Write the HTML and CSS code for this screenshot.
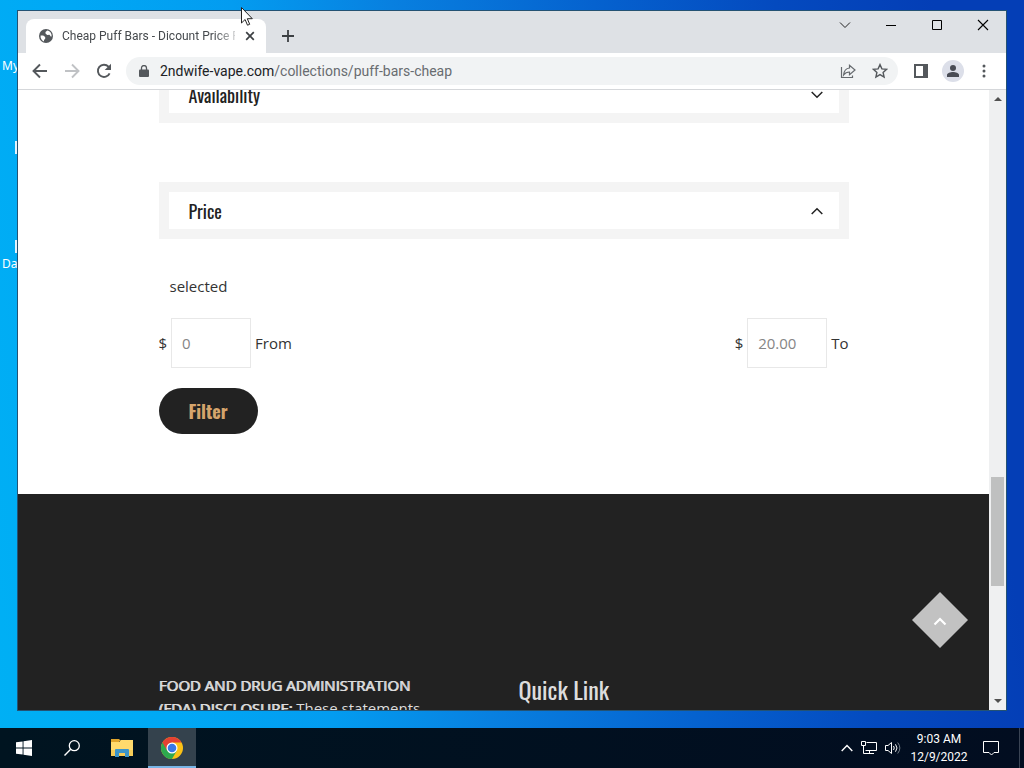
FILE: index.html
```html
<!DOCTYPE html>
<html lang="en">
<head>
<meta charset="utf-8">
<meta name="viewport" content="width=device-width, initial-scale=1">
<title>Cheap Puff Bars - Dicount Price</title>
<link rel="stylesheet" href="styles.css">
</head>
<body>
<div class="desktop">
  <div class="shortcut shortcut-my">My</div>
  <div class="shortcut-mark mark-one"></div>
  <div class="shortcut-mark mark-two"></div>
  <div class="shortcut shortcut-da">Da</div>
  <main class="window">
    <header class="titlebar">
      <div class="tab">
        <svg width="14" height="14" viewBox="0 0 14 14" aria-hidden="true"><circle cx="7" cy="7" r="7" fill="#54585c"/><path d="M1.600 6.600h2.600l2 1.500v1.700L5 11v1.600A6 6 0 0 1 1.600 6.600zM8.300 1.600 6.500 3v1.600L8.200 6l2.300-.2 1.200 1.600h.9c.3-2.800-1.500-5.200-4.300-5.800z" fill="#fff"/></svg>
        <span class="tab-title">Cheap Puff Bars - Dicount Price P</span>
        <button class="icon-btn tab-close" aria-label="Close tab"><svg width="10" height="10" viewBox="0 0 10 10"><path d="M1.200 1.200l7.600 7.600M8.800 1.200 1.200 8.800" stroke="#3c4043" stroke-width="1.700"/></svg></button>
      </div>
      <button class="icon-btn new-tab" aria-label="New tab"><svg width="14" height="14" viewBox="0 0 14 14"><path d="M7 1v12M1 7h12" stroke="#3c4043" stroke-width="1.800"/></svg></button>
      <div class="window-controls">
        <button class="icon-btn" aria-label="Search tabs"><svg width="12" height="12" viewBox="0 0 12 12"><path d="M1 3.500l5 5 5-5" fill="none" stroke="#222"/></svg></button>
        <button class="icon-btn" aria-label="Minimize"><svg width="12" height="12" viewBox="0 0 12 12"><path d="M1 6.500h10" stroke="#000"/></svg></button>
        <button class="icon-btn" aria-label="Maximize"><svg width="12" height="12" viewBox="0 0 12 12"><path d="M1.500 1.500h9v9h-9z" fill="none" stroke="#000"/></svg></button>
        <button class="icon-btn" aria-label="Close"><svg width="12" height="12" viewBox="0 0 12 12"><path d="M1 1l10 10M11 1 1 11" stroke="#000" stroke-width="1.100"/></svg></button>
      </div>
    </header>
    <nav class="toolbar" aria-label="Browser">
      <button class="icon-btn" aria-label="Back"><svg width="16" height="16" viewBox="0 0 16 16"><path d="M15 8H2M8 1.500 1.500 8 8 14.500" fill="none" stroke="#54585c" stroke-width="1.900"/></svg></button>
      <button class="icon-btn" aria-label="Forward"><svg width="16" height="16" viewBox="0 0 16 16"><path d="M1 8h13M8 1.500 14.500 8 8 14.500" fill="none" stroke="#c0c2c5" stroke-width="1.900"/></svg></button>
      <button class="icon-btn" aria-label="Reload"><svg width="16" height="16" viewBox="0 0 16 16"><path d="M13.600 10.300A6.100 6.100 0 1 1 12.500 3.700L14 5.300" fill="none" stroke="#54585c" stroke-width="1.900"/><path d="M15 .8v6.300H8.700z" fill="#54585c"/></svg></button>
      <div class="address">
        <svg width="10" height="12" viewBox="0 0 10 12" aria-hidden="true"><rect x="0" y="4.500" width="10" height="7.500" rx="1" fill="#54585c"/><path d="M2.500 5V3a2.500 2.500 0 0 1 5 0v2" fill="none" stroke="#54585c" stroke-width="1.300"/></svg>
        <a class="url" href="#">2ndwife-vape.com<span class="url-path">/collections/puff-bars-cheap</span></a>
        <button class="icon-btn" aria-label="Share"><svg width="16" height="16" viewBox="0 0 16 16"><path d="M1.500 4v10.500h11V12.500M9.500 5V2.300L15 7l-5.500 4.700V9C6.700 9 5 10 3.600 12 4 8 6 5.300 9.500 5z" fill="none" stroke="#65696d" stroke-width="1.200"/></svg></button>
        <button class="icon-btn" aria-label="Bookmark"><svg width="16" height="16" viewBox="0 0 16 16"><path d="M8 1.600l1.900 4.300 4.700.4-3.500 3.100 1 4.600L8 11.600 3.900 14l1-4.600L1.400 6.300l4.700-.4z" fill="none" stroke="#54585c" stroke-width="1.400"/></svg></button>
      </div>
      <button class="icon-btn" aria-label="Side panel"><svg width="14" height="14" viewBox="0 0 14 14"><path d="M0 0h14v14H0zM2 2v10h7V2z" fill="#54585c" fill-rule="evenodd"/></svg></button>
      <button class="icon-btn profile" aria-label="Profile"><svg width="12" height="12" viewBox="0 0 12 12"><circle cx="6" cy="3" r="3" fill="#494c55"/><path d="M0 12v-2c0-2 3.500-3 6-3s6 1 6 3v2z" fill="#494c55"/></svg></button>
      <button class="icon-btn more" aria-label="Menu"><svg width="4" height="14" viewBox="0 0 4 14"><g fill="#54585c"><circle cx="2" cy="2" r="1.500"/><circle cx="2" cy="7" r="1.500"/><circle cx="2" cy="12" r="1.500"/></g></svg></button>
    </nav>
    <div class="viewport">
      <div class="page">
        <section class="filters">
          <div class="content">
            <button class="facet facet-first">Availability<svg width="12" height="8" viewBox="0 0 12 8"><path d="M.7 1l5.300 5.300L11.300 1" fill="none" stroke="#222" stroke-width="1.500"/></svg></button>
            <button class="facet">Price<svg width="12" height="8" viewBox="0 0 12 8"><path d="M.7 7 6 1.700 11.300 7" fill="none" stroke="#222" stroke-width="1.500"/></svg></button>
            <form>
              <p class="selected">selected</p>
              <div class="range">
                <div class="field"><span>$</span><input id="from" type="text" placeholder="0"><label for="from">From</label></div>
                <div class="field"><span>$</span><input id="to" type="text" placeholder="20.00"><label for="to">To</label></div>
              </div>
              <button class="filter" type="button">Filter</button>
            </form>
          </div>
        </section>
        <footer class="footer">
          <div class="content footer-grid">
            <p class="disclosure"><strong>FOOD AND DRUG ADMINISTRATION (FDA) DISCLOSURE:</strong> These statements</p>
            <h2 class="quick">Quick Link</h2>
          </div>
        </footer>
        <button class="to-top" aria-label="Back to top"><svg width="56" height="56" viewBox="0 0 56 56"><path d="M28 0 56 28 28 56 0 28z" fill="#c2c2c2"/><path d="M22.500 32.500 28 27l5.500 5.500" fill="none" stroke="#fff" stroke-width="2.200"/></svg></button>
      </div>
      <div class="scrollbar">
        <svg width="8" height="4" viewBox="0 0 8 4"><path d="M0 4l4-4 4 4z" fill="#505050"/></svg>
        <div class="track"><div class="thumb"></div></div>
        <svg width="8" height="4" viewBox="0 0 8 4"><path d="M0 0l4 4 4-4z" fill="#505050"/></svg>
      </div>
    </div>
  </main>
  <footer class="taskbar">
    <button class="task" aria-label="Start"><svg width="16" height="16" viewBox="0 0 16 16"><path d="M0 2.300 6.600 1.400v6.100H0zM7.500 1.200 16 0v7.500H7.500zM0 8.400h6.600v6.200L0 13.700zM7.500 8.400H16V16l-8.500-1.200z" fill="#fff"/></svg></button>
    <button class="task" aria-label="Search"><svg width="16" height="16" viewBox="0 0 16 16"><circle cx="10.300" cy="5.700" r="5" fill="none" stroke="#fff" stroke-width="1.300"/><path d="M6.700 9.300.5 15.500" stroke="#fff" stroke-width="1.400"/></svg></button>
    <button class="task task-files" aria-label="File Explorer"><svg width="22" height="20" viewBox="0 0 22 20"><path d="M0 1h8l2 2h-2v3H0z" fill="#e0a52c"/><path d="M0 4h8l2-2h12v16H0z" fill="#ffda6d"/><path d="M0 12h22v6H0z" fill="#f6cc58"/><path d="M4 19v-7q0-1 1-1h12q1 0 1 1v7h-4v-4H8v4z" fill="#3c95c9"/></svg></button>
    <button class="task task-active" aria-label="Chrome"><svg width="24" height="24" viewBox="0 0 24 24"><circle cx="12" cy="12" r="11" fill="#fbc116"/><path d="M12 12 2.470 6.500A11 11 0 0 0 12 23l4.760-8.250z" fill="#2da94f"/><path d="M2.470 6.500A11 11 0 0 1 21.530 6.500H12v5.500L7.240 14.750z" fill="#e34133"/><circle cx="12" cy="12" r="5.500" fill="#fff"/><circle cx="12" cy="12" r="4.300" fill="#3978e6"/></svg></button>
    <div class="tray">
      <button class="icon-btn" aria-label="Hidden icons"><svg width="12" height="8" viewBox="0 0 12 8"><path d="M.7 7 6 1.500 11.300 7" fill="none" stroke="#fff" stroke-width="1.400"/></svg></button>
      <button class="icon-btn" aria-label="Network"><svg width="16" height="14" viewBox="0 0 16 14"><path d="M5.500 1.500h10v8H4.500M8.500 9.500v3M5 12.500h8M.5.500h4v4h-4zM2.500 4.500v8H5" fill="none" stroke="#fff"/></svg></button>
      <button class="icon-btn" aria-label="Volume"><svg width="16" height="14" viewBox="0 0 16 14"><path d="M.5 4.500H3l3.500-3v11L3 9.500H.5z" fill="none" stroke="#fff"/><path d="M8.500 5q1.500 2 0 4M10.500 3.300q3 3.700 0 7.400" fill="none" stroke="#fff"/><path d="M12.700 1.500q4.300 5.500 0 11" fill="none" stroke="#76808a"/></svg></button>
      <time class="clock"><span>9:03 AM</span><span>12/9/2022</span></time>
      <button class="icon-btn" aria-label="Notifications"><svg width="16" height="16" viewBox="0 0 16 16"><path d="M.5 1.500h15v11H11L8.500 15 6 12.500H.5z" fill="none" stroke="#fff"/></svg></button>
    </div>
  </footer>
  <svg class="cursor" width="12" height="19" viewBox="0 0 12 19" aria-hidden="true"><path d="M.5.500v15.500l3.600-3.500 2.400 5.700 2.200-.9-2.400-5.600h5z" fill="#fff" stroke="#222"/></svg>
</div>
</body>
</html>
```
FILE: styles.css
```css
* { box-sizing: border-box; }
body { margin: 0; font-family: "Open Sans", "Noto Sans", sans-serif; color: #333; }
button { margin: 0; padding: 0; border: 0; background: none; color: inherit; font: inherit; cursor: pointer; }
svg { display: block; flex: none; }
p, h2 { margin: 0; }

.desktop {
  position: relative;
  display: flex;
  flex-direction: column;
  height: 100vh;
  overflow: hidden;
  background: linear-gradient(82deg, #00b0f4 0%, #00a8f5 16%, #039cf0 30%, #0880e0 44%, #0562cf 62%, #044abf 78%, #043eb6 92%);
}
.shortcut { position: absolute; left: 2px; color: #fff; font: 12px/16px "Noto Sans", sans-serif; }
.shortcut-my { top: 58px; }
.shortcut-da { top: 256px; }
.shortcut-mark { position: absolute; left: 15px; width: 2px; height: 13px; background: #e4f3fc; }
.mark-one { top: 141px; }
.mark-two { top: 240px; }

.window {
  position: relative;
  display: flex;
  flex-direction: column;
  flex: 1;
  min-height: 0;
  margin: 10px 17px 17px;
  border: 1px solid #245273;
  background: #fff;
}
.icon-btn { display: flex; align-items: center; justify-content: center; }
.titlebar { display: flex; height: 42px; padding-left: 8px; background: #dee1e5; }
.tab {
  display: flex;
  align-items: center;
  width: 240px;
  height: 34px;
  margin-top: 8px;
  padding: 0 11px 0 13px;
  border-radius: 8px 8px 0 0;
  background: #fff;
}
.tab-title {
  flex: 1;
  min-width: 0;
  margin-left: 9px;
  overflow: hidden;
  font: 12px/16px Roboto, "Open Sans", sans-serif;
  color: #45494d;
  white-space: nowrap;
  mask-image: linear-gradient(90deg, #000 88%, transparent 104%);
}
.tab-close { margin-left: 10px; }
.new-tab { width: 28px; height: 28px; margin: 11px 0 0 8px; }
.window-controls { display: flex; height: 28px; margin-left: auto; }
.window-controls .icon-btn { width: 46px; }
.toolbar {
  display: flex;
  align-items: center;
  gap: 16px;
  height: 37px;
  padding: 0 16px 0 14px;
  border-bottom: 1px solid #d5d7da;
}
.address {
  display: flex;
  flex: 1;
  align-items: center;
  gap: 16px;
  height: 28px;
  padding: 0 10px 0 13px;
  border-radius: 14px;
  background: #f1f3f4;
}
.address > svg { margin-right: -5px; }
.toolbar > .icon-btn + .address { margin-left: -2px; }
.url { flex: 1; color: #202124; font: 14px/20px Roboto, "Noto Sans", sans-serif; text-decoration: none; white-space: nowrap; }
.url-path { color: #686c70; }
.profile { width: 22px; height: 22px; margin: 0 -2px; border-radius: 50%; background: #dcdfe9; }
.more { width: 12px; }

.viewport { display: flex; flex: 1; min-height: 0; overflow: hidden; }
.page { position: relative; display: flex; flex: 1; flex-direction: column; min-width: 0; overflow: hidden; }
.content { max-width: 690px; margin: 0 auto; }
.filters { flex: none; padding: 0 16px 60px; }
.facet {
  display: flex;
  align-items: center;
  justify-content: space-between;
  width: 100%;
  height: 57px;
  padding: 0 16px 0 20px;
  border: 10px solid #f4f4f4;
  color: #222;
  font: 18px/36px Oswald, "Roboto Condensed", "Liberation Sans Narrow", sans-serif;
}
.facet-first { margin: -24px 0 59px; }
.selected { margin: 36px 0 20px 11px; font-size: 15px; line-height: 23px; }
.range { display: flex; justify-content: space-between; font-size: 15px; }
.field { display: flex; align-items: center; gap: 4px; }
.field input {
  width: 80px;
  height: 50px;
  padding: 0 10px;
  border: 1px solid #e8e8e8;
  background: #fff;
  font: inherit;
  color: #777;
}
.field input::placeholder { color: #858585; opacity: 1; }
.filter {
  height: 46px;
  margin-top: 20px;
  padding: 0 30px;
  border-radius: 23px;
  background: #222;
  color: #d5a46c;
  font: 700 18px/46px Oswald, "Roboto Condensed", "Liberation Sans Narrow", sans-serif;
}
.footer { flex: 1; padding: 180px 16px 0; background: #222; color: #ddd; }
.footer-grid { display: grid; grid-template-columns: 270px 1fr; column-gap: 90px; }
.disclosure { font-size: 15px; line-height: 23px; }
.disclosure strong { font-weight: 400; text-shadow: 1px 0 0 #ddd; }
.quick { font: 400 24px/30px Oswald, "Roboto Condensed", "Liberation Sans Narrow", sans-serif; }
.to-top { position: absolute; right: 21px; bottom: 62px; }

.scrollbar {
  display: flex;
  flex-direction: column;
  align-items: center;
  width: 17px;
  padding: 7px 0;
  background: #eff0f1;
}
.track { display: flex; flex: 1; flex-direction: column; justify-content: flex-end; padding-bottom: 113px; }
.thumb { width: 13px; height: 109px; background: #bfc0c0; }

.taskbar { display: flex; height: 40px; background: linear-gradient(90deg, #001420, #020d20); }
.task { display: flex; align-items: center; justify-content: center; width: 48px; border-bottom: 2px solid transparent; border-top: 2px solid transparent; }
.task-files { width: 52px; }
.task-active { border-color: #34424d #34424d #78b5e6; background: #34424d; background-clip: padding-box; }
.tray { display: flex; align-items: center; margin-left: auto; padding-right: 20px; border-right: 1px solid #3a4454; margin-right: 4px; gap: 8px; }
.clock { display: flex; flex-direction: column; align-items: center; width: 60px; margin-right: 6px; color: #fff; font: 12px/18px Roboto, "Noto Sans", sans-serif; }
.cursor { position: absolute; left: 241px; top: 7px; }
```
